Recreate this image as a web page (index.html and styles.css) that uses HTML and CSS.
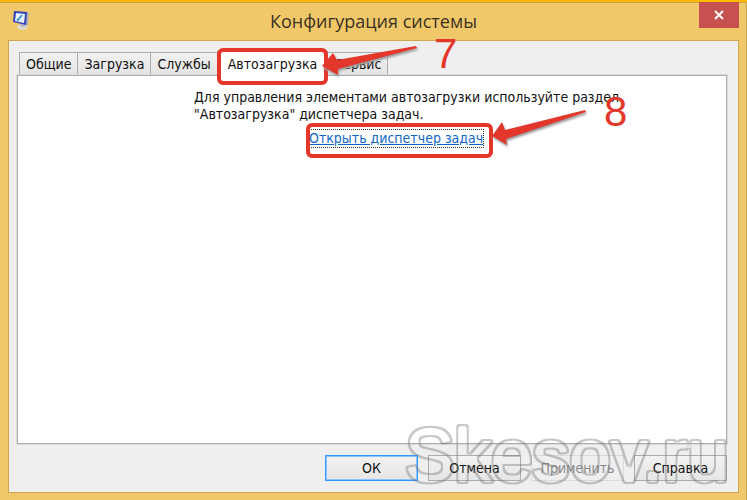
FILE: index.html
```html
<!DOCTYPE html>
<html lang="ru">
<head>
    <meta charset="UTF-8">
    <title>Конфигурация системы</title>
    <link rel="stylesheet" href="styles.css">
</head>
<body>
<div class="window">
    <div class="titlebar">
        <svg class="app-icon" width="18" height="20" viewBox="0 0 18 20">
            <path d="M6 15l6-1 4 3-1 2-5 1-5-2z" fill="#dedbd4"/>
            <path d="M8 13l5 0 1 4-5 0z" fill="#b8b8bc"/>
            <path d="M15 2l2 1-1 12-3 1z" fill="#aeb0bb"/>
            <path d="M2 1l13 1-1 13-13-3z" fill="#3344b8"/>
            <path d="M4 3l9 1-1 9-9-2z" fill="#eef5ff"/>
            <path d="M5 9l1 1 4-5" fill="none" stroke="#3a9ad8" stroke-width="2"/>
        </svg>
        <h1>Конфигурация системы</h1>
        <button class="close" type="button" aria-label="Закрыть">
            <svg width="12" height="10" viewBox="0 0 12 10"><path d="M2 1l8 8M10 1l-8 8" stroke="#fff" stroke-width="2"/></svg>
        </button>
    </div>
    <div class="client">
        <div class="tabs" role="tablist">
            <button type="button" role="tab">Общие</button>
            <button type="button" role="tab">Загрузка</button>
            <button type="button" role="tab">Службы</button>
            <button type="button" role="tab" class="current" aria-selected="true">Автозагрузка</button>
            <button type="button" role="tab">Сервис</button>
        </div>
        <div class="panel" role="tabpanel">
            <div class="message">
                <p>Для управления элементами автозагрузки используйте раздел<br>"Автозагрузка" диспетчера задач.</p>
                <a class="task-link" href="#">Открыть диспетчер задач</a>
            </div>
        </div>
        <div class="buttons">
            <button type="button" class="default">ОК</button>
            <button type="button">Отмена</button>
            <button type="button" disabled>Применить</button>
            <button type="button">Справка</button>
        </div>
    </div>

    <!-- стрелки и номера шагов -->
    <svg class="steps" width="640" height="170" viewBox="0 0 640 170">
        <g class="arrow">
            <path d="M322 66L333 53 337 60 416 46 417 48 338 69 338 75z"/>
            <path d="M492 136L502 122 505 130 585 110 586 112 506 139 507 145z"/>
        </g>
        <text x="434" y="68">7</text>
        <text x="604" y="126">8</text>
    </svg>

    <svg class="watermark" width="344" height="90" viewBox="0 0 344 90">
        <filter id="outline" filterUnits="userSpaceOnUse" x="0" y="0" width="344" height="90">
            <feMorphology in="SourceGraphic" operator="erode" radius="2" result="inner"/>
            <feComposite in="SourceGraphic" in2="inner" operator="out"/>
        </filter>
        <text x="5" y="72" filter="url(#outline)">Skesov.ru</text>
    </svg>
</div>
</body>
</html>
```
FILE: styles.css
```css
* {
    box-sizing: border-box;
    margin: 0;
    padding: 0;
}

body {
    font-family: "DejaVu Sans Condensed", "DejaVu Sans", sans-serif;
    font-size: 14px;
    color: #111;
}

button {
    font: inherit;
    color: inherit;
}

.window {
    position: relative;
    display: flex;
    flex-direction: column;
    min-height: 100vh;
    padding: 0 8px 7px;
    background: #f0c869;
    border-top: 2px solid #ffb900;
    box-shadow: inset 0 1px #c9a24d, inset -1px 0 #c9a24d;
    overflow: hidden;
}

.titlebar {
    display: grid;
    grid-template-columns: 40px 1fr 40px;
    height: 38px;
}

.app-icon {
    margin: 8px 0 0 4px;
}

.titlebar h1 {
    font-family: "Open Sans", "Noto Sans", sans-serif;
    font-size: 18px;
    font-weight: normal;
    line-height: 38px;
    text-align: center;
    color: #3b3222;
}

.close {
    width: 40px;
    height: 26px;
    background: #c75050;
    border: none;
}

.client {
    flex: 1;
    display: flex;
    flex-direction: column;
    padding: 10px 11px 11px 8px;
    background: #efefef;
    border: 1px solid #cfa650;
}

.tabs {
    display: flex;
    align-items: flex-end;
    padding-left: 2px;
}

.tabs button {
    height: 23px;
    padding: 0 6px;
    line-height: 23px;
    background: linear-gradient(#f1f1f1, #e4e4e4);
    border: 1px solid #acacac;
    border-bottom: none;
    margin-right: -1px;
}

.tabs .current {
    position: relative;
    height: 25px;
    padding: 0 10px;
    line-height: 20px;
    margin-bottom: -1px;
    background: #fff;
    z-index: 1;
}

.tabs .current::after {
    content: "";
    position: absolute;
    inset: -4px -1px -9px;
    border: 4px solid #e3372c;
    border-radius: 6px;
}

.panel {
    flex: 1;
    padding: 13px 16px 13px 176px;
    background: #fff;
    border: 1px solid #acacac;
    box-shadow: 0 0 0 1px #dcdcdc;
}

.message {
    width: max-content;
}

.message p {
    line-height: 17px;
}

.task-link {
    position: relative;
    display: block;
    width: max-content;
    margin: 7px 0 0 115px;
    line-height: 17px;
    color: #0f67c9;
    text-decoration: underline;
    outline: 1px dotted #333;
}

.task-link::after {
    content: "";
    position: absolute;
    inset: -7px -10px -11px -3px;
    border: 4px solid #e3372c;
    border-radius: 6px;
}

.buttons {
    display: flex;
    justify-content: flex-end;
    gap: 10px;
    padding-top: 11px;
}

.buttons button {
    width: 93px;
    height: 26px;
    background: linear-gradient(#f2f2f2, #e6e6e6);
    border: 1px solid #acacac;
}

.buttons .default {
    border: 1px solid #3399ff;
    box-shadow: inset 0 0 0 1px #8cc4ff;
}

.buttons button:disabled {
    color: #8b8b8b;
    background: #efefef;
    border-color: #dadada;
}

.steps {
    position: absolute;
    left: 0;
    top: -2px;
    z-index: 2;
    pointer-events: none;
}

.steps .arrow {
    fill: #e3372c;
    filter: drop-shadow(1px 2px 1px #999);
}

.steps text {
    font-family: "Liberation Sans", sans-serif;
    font-size: 42px;
    fill: #e3372c;
}

.watermark {
    position: absolute;
    right: 3px;
    bottom: 1px;
    z-index: 2;
    opacity: 0.4;
    pointer-events: none;
}

/* толстая обводка утолщает буквы, фильтр оставляет только контур */
.watermark text {
    font-family: "Liberation Sans", sans-serif;
    font-size: 74px;
    fill: #777;
    stroke: #777;
    stroke-width: 6px;
    stroke-linejoin: round;
}
```
